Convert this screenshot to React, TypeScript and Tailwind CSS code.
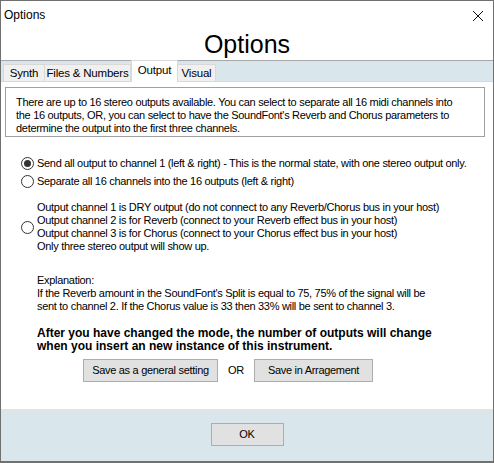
const Radio = ({ checked }: { checked?: boolean }) => (
  <span className="flex h-[13px] w-[13px] shrink-0 items-center justify-center rounded-full border border-[#333333] bg-white">
    {checked && <span className="h-[7px] w-[7px] rounded-full bg-[#333333]" />}
  </span>
);

export default function App() {
  const tabs = ['Synth', 'Files & Numbers', 'Output', 'Visual'];

  return (
    <div className="flex h-[463px] w-[494px] flex-col overflow-hidden border border-b-2 border-[#707070] bg-white font-['Liberation_Sans',Arial,sans-serif] text-[11px] leading-[13px] tracking-[-0.3px] text-black">
      {/* Title bar */}
      <div className="flex h-[29px] shrink-0 items-center justify-between pl-[3px] pr-[8px]">
        <span className="text-[12px] tracking-normal">Options</span>
        <svg width="12" height="12" viewBox="0 0 12 12" className="mr-[1px]">
          <path d="M1 1 L11 11 M11 1 L1 11" stroke="#111" strokeWidth="1" />
        </svg>
      </div>

      {/* Heading */}
      <div className="flex h-[30px] shrink-0 items-center justify-center pb-[2px] text-[25px] leading-none tracking-normal">
        Options
      </div>

      {/* Tab strip */}
      <div className="flex h-[21px] shrink-0 items-end border-t border-[#a8a8a8] bg-[#d9e7ec] pl-[2px] text-[11.5px] tracking-[-0.2px]">
        {tabs.map((tab) =>
          tab === 'Output' ? (
            <div
              key={tab}
              className="relative z-10 mb-[-1px] flex h-[22px] w-[47px] items-center justify-center border-x border-t border-[#d9d9d9] bg-white pb-[3px]"
            >
              {tab}
            </div>
          ) : (
            <div
              key={tab}
              className={`flex h-[17px] items-center justify-center border-x border-t border-[#d9d9d9] bg-[#f0f0f0] ${
                tab === 'Synth' ? 'w-[41px] border-r-0' : tab === 'Visual' ? 'w-[38px] border-l-0' : 'w-[87px]'
              }`}
            >
              {tab}
            </div>
          )
        )}
      </div>

      {/* Tab panel */}
      <div className="flex flex-1 flex-col border-t border-[#d9d9d9] bg-white">
        <div className="ml-[4px] mt-[5px] w-[480px] border border-[#a0a0a0] pb-[1px] pl-[10px] pt-[8px]">
          There are up to 16 stereo outputs available. You can select to separate all 16 midi channels into
          <br />
          the 16 outputs, OR, you can select to have the SoundFont's Reverb and Chorus parameters to
          <br />
          determine the output into the first three channels.
        </div>

        <div className="ml-[20px] mt-[20px] flex flex-col">
          <div className="flex items-center gap-[3px]">
            <Radio checked />
            <span className="whitespace-nowrap">
              Send all output to channel 1 (left &amp; right) - This is the normal state, with one stereo output only.
            </span>
          </div>
          <div className="mt-[5px] flex items-center gap-[3px]">
            <Radio />
            <span>Separate all 16 channels into the 16 outputs (left &amp; right)</span>
          </div>
          <div className="mt-[13px] flex items-center gap-[3px]">
            <Radio />
            <span className="whitespace-nowrap">
              Output channel 1 is DRY output (do not connect to any Reverb/Chorus bus in your host)
              <br />
              Output channel 2 is for Reverb (connect to your Reverb effect bus in your host)
              <br />
              Output channel 3 is for Chorus (connect to your Chorus effect bus in your host)
              <br />
              Only three stereo output will show up.
            </span>
          </div>
        </div>

        <div className="ml-[36px] mt-[21px] whitespace-nowrap">
          Explanation:
          <br />
          If the Reverb amount in the SoundFont's Split is equal to 75, 75% of the signal will be
          <br />
          sent to channel 2. If the Chorus value is 33 then 33% will be sent to channel 3.
        </div>

        <div className="ml-[36px] mt-[14px] whitespace-nowrap text-[12px] font-bold leading-[13px] tracking-normal">
          After you have changed the mode, the number of outputs will change
          <br />
          when you insert an new instance of this instrument.
        </div>

        <div className="ml-[82px] mt-[6px] flex items-center">
          <button className="h-[23px] w-[135px] whitespace-nowrap border border-[#adadad] bg-[#e1e1e1]">
            Save as a general setting
          </button>
          <span className="w-[36px] text-center">OR</span>
          <button className="h-[23px] w-[119px] whitespace-nowrap border border-[#adadad] bg-[#e1e1e1]">
            Save in Arragement
          </button>
        </div>
      </div>

      {/* Footer */}
      <div className="flex h-[52px] shrink-0 items-center justify-center border-t-2 border-[#e3e3e3] bg-[#d9e7ec] pb-[3px]">
        <button className="h-[23px] w-[73px] border border-[#adadad] bg-[#e1e1e1]">OK</button>
      </div>
    </div>
  );
}
